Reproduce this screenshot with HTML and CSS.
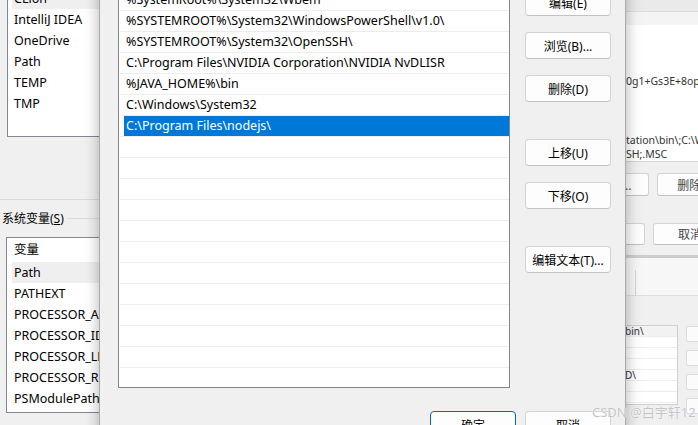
FILE: index.html
```html
<!doctype html>
<html>
    <head>
        <meta charset="UTF-8">
        <title>编辑环境变量</title>
        <link rel="stylesheet" href="styles.css">
    </head>
    <body>
        <!-- 后面的"环境变量"窗口 -->
        <div class="win-back">
            <ul class="var-list user-list">
                <li class="hover">CLion</li>
                <li>IntelliJ IDEA</li>
                <li>OneDrive</li>
                <li>Path</li>
                <li>TEMP</li>
                <li>TMP</li>
            </ul>
            <div class="split"></div>
            <div class="group-title"><span>系统变量(<u>S</u>)</span></div>
            <ul class="var-list sys-list">
                <li class="head">变量</li>
                <li class="hover">Path</li>
                <li>PATHEXT</li>
                <li>PROCESSOR_ARCHITECTURE</li>
                <li>PROCESSOR_IDENTIFIER</li>
                <li>PROCESSOR_LEVEL</li>
                <li>PROCESSOR_REVISION</li>
                <li>PSModulePath</li>
            </ul>
        </div>

        <!-- 右边露出来的窗口 -->
        <div class="win-value">
            <div class="wv-top"></div>
            <div class="wv-bar"></div>
            <div class="wv-box">
                <p class="l1">0g1+Gs3E+8op.</p>
                <p class="l2">tation\bin\;C:\W</p>
                <p>SH;.MSC</p>
            </div>
            <div class="wv-btns">
                <button class="b1">编辑(I)...</button>
                <button class="b2">删除(L)</button>
            </div>
            <div class="wv-btns row2">
                <button class="b1">确定</button>
                <button class="b2">取消</button>
            </div>
            <div class="wv-sep"></div>
            <div class="wv-sub"><div class="wv-tick"></div></div>
            <div class="wv-lower">
                <ul class="wv-list">
                    <li class="on">bin\</li>
                    <li></li>
                    <li></li>
                    <li></li>
                    <li>D\</li>
                    <li></li>
                    <li></li>
                </ul>
                <div class="wv-side">
                    <span></span><span></span><span></span><span></span>
                </div>
            </div>
        </div>

        <!-- 编辑环境变量对话框 -->
        <div class="dialog">
            <div class="dlg-main">
                <ul class="path-list">
                    <li><span class="cell">%SystemRoot%\system32</span></li>
                    <li><span class="cell">%SystemRoot%\System32\Wbem</span></li>
                    <li><span class="cell">%SYSTEMROOT%\System32\WindowsPowerShell\v1.0\</span></li>
                    <li><span class="cell">%SYSTEMROOT%\System32\OpenSSH\</span></li>
                    <li><span class="cell">C:\Program Files\NVIDIA Corporation\NVIDIA NvDLISR</span></li>
                    <li><span class="cell">%JAVA_HOME%\bin</span></li>
                    <li><span class="cell">C:\Windows\System32</span></li>
                    <li class="selected"><span class="cell">C:\Program Files\nodejs\</span></li>
                    <li></li><li></li><li></li><li></li>
                    <li></li><li></li><li></li><li></li>
                    <li></li><li></li><li></li><li></li>
                </ul>
                <div class="dlg-side">
                    <button>编辑(E)</button>
                    <button>浏览(B)...</button>
                    <button>删除(D)</button>
                    <button class="more-space">上移(U)</button>
                    <button>下移(O)</button>
                    <button class="more-space">编辑文本(T)...</button>
                </div>
            </div>
            <div class="dlg-foot">
                <button class="default">确定</button>
                <button>取消</button>
            </div>
        </div>

        <div class="watermark">CSDN @白宇轩12</div>
    </body>
</html>
```

FILE: styles.css
```css
*{
    margin: 0;
    padding: 0;
    box-sizing: border-box;
}
ul{
    list-style: none;
}
html,body{
    width: 698px;
    height: 425px;
    overflow: hidden;
}
body{
    position: relative;
    background: #f0f0f0;
    font-family: "Noto Sans", "Noto Sans CJK SC", sans-serif;
    font-size: 12.5px;
    color: #000;
}
button{
    font-family: inherit;
    font-size: 12px;
    color: #000;
    background: #fdfdfd;
    border: 1px solid #d3d3d3;
    border-bottom-color: #c2c2c2;
    border-radius: 4px;
    white-space: nowrap;
    flex-shrink: 0;
}

/* 后面的窗口 */
.win-back{
    position: absolute;
    left: 0;
    top: 0;
    width: 220px;
    height: 425px;
    background: #f0f0f0;
}
.var-list{
    background: #fff;
    border: 1px solid #828790;
    overflow: hidden;
}
.var-list li{
    height: 21px;
    line-height: 21px;
    padding-left: 2px;
    white-space: nowrap;
}
.var-list li.hover{
    background: #efefef;
}
.user-list{
    margin: -13px 0 0 7px;
    padding-left: 4px;
    height: 150px;
}
.split{
    height: 1px;
    margin-top: 62px;
    background: #dadada;
}
.group-title{
    display: flex;
    align-items: center;
    gap: 3px;
    height: 18px;
    margin-top: 9px;
    padding-left: 2px;
    font-size: 12px;
}
.group-title::after{
    content: "";
    flex: 1;
    height: 1px;
    background: #dcdcdc;
}
.sys-list{
    margin: 10px 0 0 6px;
    padding-left: 5px;
    height: 176px;
}
.sys-list li.head{
    height: 24px;
    line-height: 24px;
}

/* 右边露出的窗口 */
.win-value{
    position: absolute;
    left: 560px;
    top: 0;
    width: 160px;
    height: 425px;
    background: #f0f0f0;
    color: #333;
    font-size: 10.5px;
    overflow: hidden;
}
.wv-top{
    height: 12px;
    background: #eaeaea;
    border-bottom: 1px solid #dcdcdc;
}
.wv-bar{
    height: 13px;
    background: #f4f4f4;
}
.wv-box{
    height: 137px;
    padding: 49px 0 0 66px;
    background: #fff;
    border-bottom: 1px solid #d4d4d4;
    line-height: 14px;
    white-space: nowrap;
}
.wv-box .l2{
    margin-top: 45px;
}
.wv-btns{
    display: flex;
    gap: 8px;
    margin-top: 11px;
    padding-left: 9px;
}
.wv-btns button{
    height: 23px;
    border-radius: 3px;
    color: #444;
}
.wv-btns .b1{
    width: 80px;
}
.wv-btns .b2{
    width: 78px;
}
.wv-btns.row2{
    margin-top: 27px;
    padding-left: 5px;
}
.wv-btns.row2 button{
    height: 22px;
}
.wv-btns.row2 .b2{
    width: 74px;
}
.wv-sep{
    height: 3px;
    margin-top: 10px;
    background: #cdcdcd;
}
.wv-sub{
    height: 38px;
    background: #f7f7f7;
    border-bottom: 1px solid #dedede;
    padding: 12px 0 0 75px;
}
.wv-tick{
    height: 25px;
    border-left: 1px solid #d6d6d6;
}
.wv-lower{
    display: flex;
    gap: 8px;
    margin-top: 29px;
}
.wv-list{
    width: 118px;
    height: 80px;
    background: #fff;
    border: 1px solid #cfcfcf;
    border-left: 0;
    flex-shrink: 0;
}
.wv-list li{
    height: 11px;
    line-height: 10px;
    font-size: 10px;
    padding-left: 65px;
    border-bottom: 1px solid #ededed;
}
.wv-list li.on{
    background: #f2f2f2;
}
.wv-side{
    display: flex;
    flex-direction: column;
    gap: 8px;
    padding-top: 1px;
}
.wv-side span{
    display: block;
    width: 40px;
    height: 16px;
    background: #fbfbfb;
    border: 1px solid #dcdcdc;
    border-radius: 2px;
}

/* 对话框 */
.dialog{
    position: absolute;
    left: 99px;
    top: -40px;
    width: 527px;
    height: 480px;
    padding: 8px 14px 0 18px;
    background: #f0f0f0;
    border-left: 1px solid #a9a9a9;
    border-right: 1px solid #a9a9a9;
    box-shadow: 0 0 14px rgba(0,0,0,0.3);
    z-index: 2;
}
.dlg-main{
    display: flex;
    align-items: flex-start;
    gap: 15px;
}
.path-list{
    width: 392px;
    height: 420px;
    padding-left: 1px;
    background: #fff;
    border: 1px solid #848484;
    overflow: hidden;
    flex-shrink: 0;
}
.path-list li{
    height: 21px;
    padding-left: 4px;
    border-bottom: 1px solid #ececec;
}
.path-list .cell{
    display: block;
    height: 20px;
    line-height: 20px;
    padding-left: 2px;
    white-space: nowrap;
}
.path-list .selected .cell{
    background: #0078d7;
    color: #fff;
}
.dlg-side{
    display: flex;
    flex-direction: column;
    gap: 16px;
    width: 86px;
    padding-top: 21px;
}
.dlg-side button{
    height: 27px;
}
.dlg-side .more-space{
    margin-top: 21px;
}
.dlg-foot{
    display: flex;
    justify-content: flex-end;
    gap: 9px;
    margin-top: 23px;
}
.dlg-foot button{
    width: 86px;
    height: 27px;
}
.dlg-foot .default{
    border: 1px solid #0067c0;
}

.watermark{
    position: absolute;
    left: 592px;
    top: 402px;
    font-size: 13px;
    color: #c4c4c4;
    text-shadow: 0 0 1px #fff, 0 0 1px #fff;
    z-index: 3;
}
```
